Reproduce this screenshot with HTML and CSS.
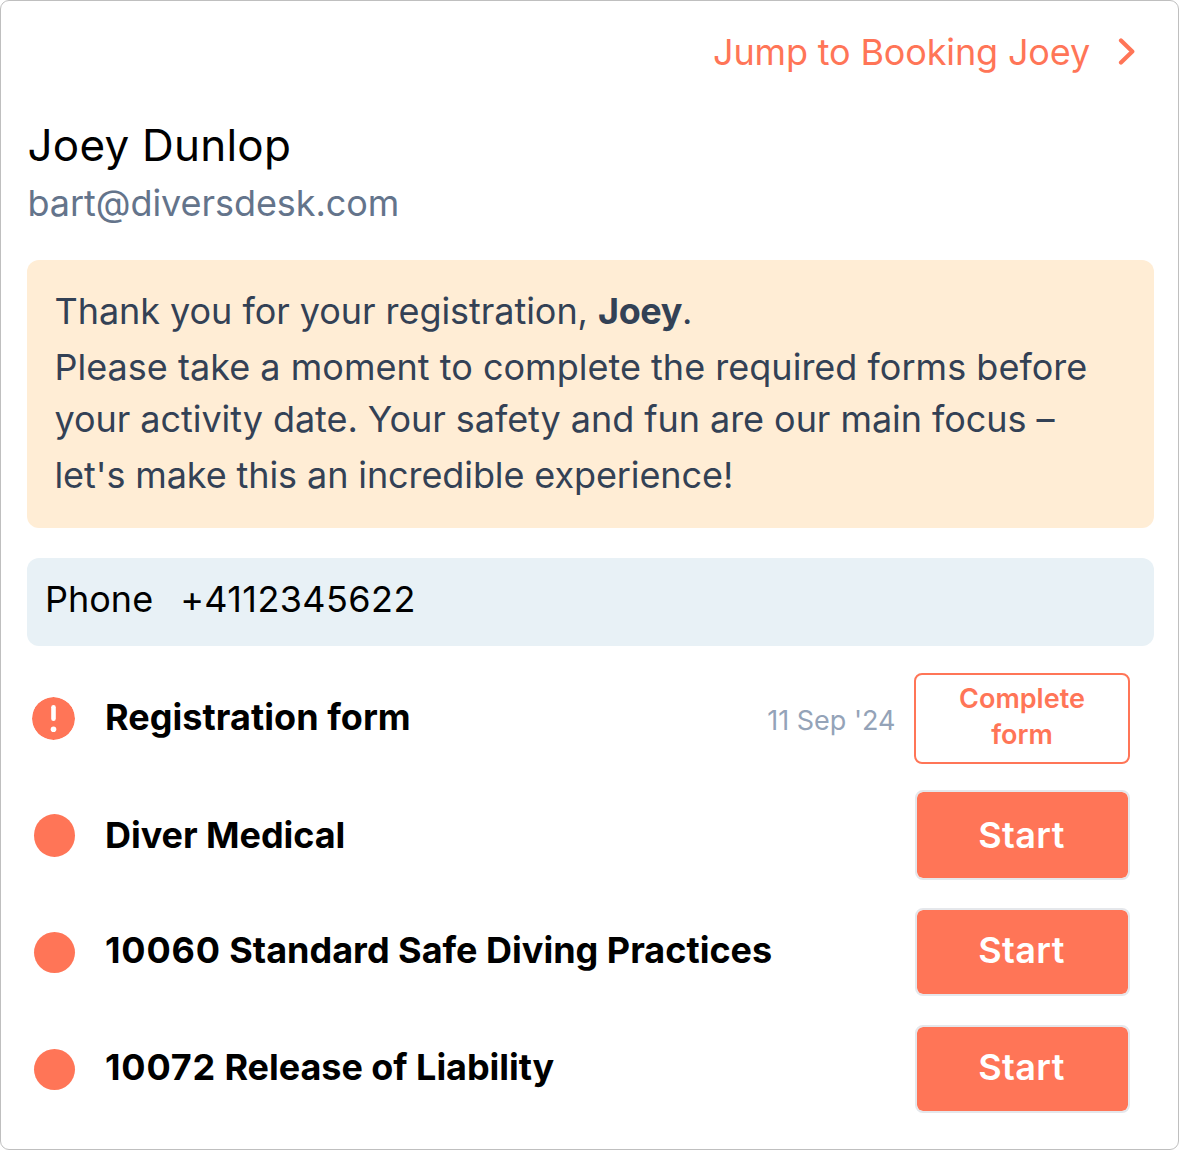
FILE: index.html
```html
<!DOCTYPE html>
<html lang="en">
<head>
<meta charset="utf-8">
<title>Joey Dunlop</title>
<link rel="stylesheet" href="styles.css">
</head>
<body>
<main class="card">
  <nav class="jump"><a class="jump-link">Jump to Booking Joey</a>
    <svg class="chevron" viewBox="0 0 18 28"><path d="M3 2.5 14.3 13.5 3 24.5"/></svg></nav>
  <header class="person">
    <h1 class="name">Joey Dunlop</h1>
    <p class="email">bart@diversdesk.com</p>
  </header>
  <section class="notice">
    <p class="line line-first">Thank you for your registration, <b>Joey</b>.</p>
    <p class="line line-second">Please take a moment to complete the required forms before</p>
    <p class="line line-third">your activity date. Your safety and fun are our main focus –</p>
    <p class="line line-last">let's make this an incredible experience!</p>
  </section>
  <section class="phone"><span class="phone-label">Phone</span><span class="phone-number">+4112345622</span></section>
  <ul class="forms">
    <li class="row row-registration">
      <svg class="status status-alert" viewBox="0 0 43 43"><circle cx="21.5" cy="21.5" r="21.5"/><path d="M21.5 10.3v11.4"/><circle class="mark" cx="21.5" cy="32.3" r="2.8"/></svg>
      <span class="title title-registration">Registration form</span>
      <span class="date">11 Sep '24</span>
      <button class="outline">Complete<br>form</button>
    </li>
    <li class="row row-medical"><i class="status"></i><span class="title title-medical">Diver Medical</span><button class="start">Start</button></li>
    <li class="row row-practices"><i class="status"></i><span class="title title-practices"><span class="code">10060</span> Standard Safe Diving Practices</span><button class="start">Start</button></li>
    <li class="row row-liability"><i class="status"></i><span class="title title-liability"><span class="code">10072</span> Release of Liability</span><button class="start">Start</button></li>
  </ul>
</main>
</body>
</html>
```
FILE: styles.css
```css
* { box-sizing: border-box; margin: 0; padding: 0; }
body { background: #fff; font-family: Inter, sans-serif; }
.card { height: 1150px; border: 1px solid #bfbfbf; border-radius: 9px; padding: 0 24px 0 25.5px; white-space: nowrap; }
.jump { display: flex; height: 102px; justify-content: flex-end; align-items: center; gap: 26px; padding-right: 18px; color: #ff7557; font-size: 36px; letter-spacing: -.15px; }
.jump-link { margin-right: 2px; }
.chevron { width: 18px; height: 28px; fill: none; stroke: #ff7557; stroke-width: 4.2; stroke-linecap: round; stroke-linejoin: round; }
.person { height: 156.5px; padding: 15px 0 0 1px; }
.name { font-size: 44px; line-height: 54px; font-weight: 400; letter-spacing: .22px; }
.email { font-size: 36px; line-height: 44px; padding-top: 9px; height: 62px; color: #64748b; letter-spacing: -.06px; }
.notice { height: 268.5px; border-radius: 12px; background: #ffedd5; color: #334155; padding: 23.5px 28px; }
.line { font-size: 36px; line-height: 56px; height: 56px; letter-spacing: -.05px; }
.line b { font-weight: 700; letter-spacing: -.4px; }
.line-last { letter-spacing: -.1px; }
.line-second { height: 52px; letter-spacing: .02px; }
.phone { display: flex; gap: 27px; margin-top: 29.5px; height: 88px; border-radius: 12px; background: #e8f1f6; padding: 19.5px 18.5px; font-size: 36px; line-height: 44px; }
.phone-number { letter-spacing: .4px; }
.forms { list-style: none; padding: 27px 24px 0 6.5px; }
.row { display: flex; align-items: center; height: 117px; }
.row-registration { height: 91px; margin-bottom: 13px; }
.status { width: 41px; height: 41px; border-radius: 50%; background: #ff7557; flex: none; margin-left: .5px; }
.row-medical .status { height: 43px; }
.status-alert { width: 43px; height: 43px; background: none; fill: #ff7557; stroke: none; margin-left: -1.5px; }
.status-alert path { stroke: #fff; stroke-width: 4.6; stroke-linecap: round; }
.status-alert .mark { fill: #fff; }
.title { flex: 1; margin-left: 30.5px; padding-bottom: 2px; font-size: 36px; font-weight: 700; }
.title-registration { letter-spacing: .05px; }
.title-medical { padding-bottom: 0; letter-spacing: -.05px; }
.title-practices, .title-liability { padding-bottom: 4px; }
.title-liability { letter-spacing: -.05px; }
.code { letter-spacing: .8px; }
.date { color: #94a3b8; font-size: 27px; margin-right: 18.5px; padding-top: 4px; }
.outline { width: 216px; height: 91px; border: 2px solid #ff7557; border-radius: 8px; background: #fff; color: #ff7557; font: 600 27px/36px Inter, sans-serif; padding-bottom: 2px; }
.start { width: 215px; height: 90px; border: 2px solid #e5e7eb; border-radius: 8px; background: #ff7557; background-clip: padding-box; color: #fff; font: 600 36px/44px Inter, sans-serif; letter-spacing: .4px; padding: 0 2px 0 0; }
.row-practices .start, .row-liability .start { height: 88px; padding-bottom: 5px; }
```
